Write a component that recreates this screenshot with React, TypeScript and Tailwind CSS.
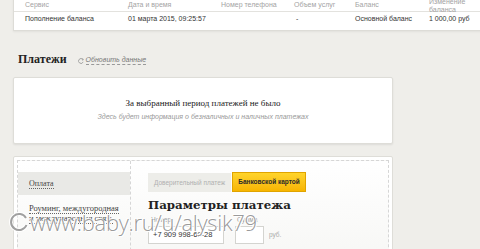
import React from "react";

const sans = { fontFamily: '"Liberation Sans", Arial, sans-serif' };
const serif = { fontFamily: '"Liberation Serif", "DejaVu Serif", serif' };
const serifWide = { fontFamily: '"DejaVu Serif", "Liberation Serif", serif' };

export default function App() {
  return (
    <div className="relative w-[480px] h-[249px] overflow-hidden bg-[#efeeea]" style={sans}>
      {/* top table card */}
      <div className="ml-[13px] mt-[-7px] w-[480px] bg-white border-l border-b border-[#dddcd7] shadow-[0_1px_2px_rgba(0,0,0,0.06)]">
        <div className="grid grid-cols-[103px_93px_73px_61px_74px_1fr] pl-[11px] h-[19px] items-center border-b border-[#e3e2de] text-[7px] leading-[8px] text-[#a3a3a3]">
          <div className="pt-[3px]">Сервис</div>
          <div className="pt-[3px]">Дата и время</div>
          <div className="pt-[3px]">Номер телефона</div>
          <div className="pt-[3px]">Объем услуг</div>
          <div className="pt-[3px]">Баланс</div>
          <div className="pt-[5px]">Изменение<br />баланса</div>
          <div />
        </div>
        <div className="grid grid-cols-[103px_93px_73px_61px_74px_1fr] pl-[11px] h-[18px] items-center text-[7px] text-[#333]">
          <div>Пополнение баланса</div>
          <div>01 марта 2015, 09:25:57</div>
          <div />
          <div className="pl-[2px]">-</div>
          <div>Основной баланс</div>
          <div>1 000,00 руб</div>
          <div />
        </div>
      </div>

      {/* Платежи header */}
      <div className="flex items-end ml-[18px] mt-[21px] h-[14px] gap-[11px]">
        <div className="text-[12px] leading-[13px] font-bold text-[#222]" style={serif}>Платежи</div>
        <div className="flex items-center gap-[2px] pb-[1px] text-[7px] leading-[8px] italic text-[#777]">
          <svg width="6" height="6" viewBox="0 0 10 10" className="mt-[1px]">
            <path d="M8 2.5 A4 4 0 1 0 8.6 6.5" fill="none" stroke="#888" strokeWidth="1.2" />
            <path d="M6.5 1 L9 2.2 L7.6 4.4" fill="none" stroke="#888" strokeWidth="1.1" />
          </svg>
          <span className="border-b border-dashed border-[#999]">Обновить данные</span>
        </div>
      </div>

      {/* empty state card */}
      <div className="ml-[13px] mt-[11px] w-[380px] h-[67px] bg-white border border-[#deddd8] rounded-[2px] shadow-[0_1px_2px_rgba(0,0,0,0.08)] flex flex-col items-center pt-[20px]">
        <div className="text-[9px] leading-[11px] text-[#222]" style={serif}>За выбранный период платежей не было</div>
        <div className="mt-[4px] text-[7px] leading-[8px] italic text-[#999]">Здесь будет информация о безналичных и наличных платежах</div>
      </div>

      {/* payment card */}
      <div className="ml-[13px] mt-[12px] w-[380px] h-[120px] bg-white border border-[#deddd8] rounded-[2px] p-[3px]">
        <div className="flex h-full border border-dashed border-[#d6d6d6] bg-gradient-to-b from-white to-[#f6f6f4]">
          <div className="w-[113px] border-r border-dashed border-[#d6d6d6] pt-[11px]">
            <div className="h-[23px] bg-[#e9e9e6] flex items-center pl-[11px]">
              <span className="text-[8px] leading-[9px] text-[#444] border-b border-dotted border-[#666]" style={serif}>Оплата</span>
            </div>
            <div className="pl-[11px] pt-[8px] text-[8.5px] leading-[10px] text-[#444]" style={serif}>
              <span className="border-b border-dotted border-[#666]">Роуминг, междугородная</span>
              <br />
              <span className="border-b border-dotted border-[#666]">и международная связь</span>
            </div>
          </div>
          <div className="flex-1 pl-[17px] pt-[11px]">
            <div className="flex items-start">
              <div className="h-[19px] mt-[1px] w-[83px] bg-[#edede9] flex items-center justify-center text-[6.5px] text-[#b0b0b0]">Доверительный платеж</div>
              <div className="h-[20px] w-[74px] ml-[1px] bg-gradient-to-b from-[#ffd42a] to-[#f7b500] border border-[#e0a400] flex items-center justify-center text-[6.5px] font-bold text-[#2a2a2a]">Банковской картой</div>
            </div>
            <div className="mt-[6px] text-[11.8px] leading-[14px] font-bold text-[#222]" style={serifWide}>Параметры платежа</div>
            <div className="flex mt-[4px] text-[6.5px] leading-[8px] text-[#999]">
              <span className="ml-[3px] w-[86px]">Номер</span>
              <span>Сумма</span>
            </div>
            <div className="flex items-center mt-[2px]">
              <div className="w-[76px] h-[18px] bg-white border border-[#d4d4d0] flex items-center pl-[4px] text-[7.5px] text-[#333]">+7 909 998-60-28</div>
              <div className="ml-[11px] w-[29px] h-[18px] bg-white border border-[#d4d4d0]" />
              <span className="ml-[5px] text-[6.5px] text-[#aaa]">руб.</span>
            </div>
          </div>
        </div>
      </div>

      {/* watermark */}
      <div className="absolute left-[9px] top-[209px] flex items-center pointer-events-none">
        <svg width="20" height="20" viewBox="0 0 20 20">
          <path d="M17 6 A8 8 0 1 0 17.5 13" fill="none" stroke="white" strokeWidth="4" />
          <path d="M17 6 A8 8 0 1 0 17.5 13" fill="none" stroke="#a0a0a0" strokeWidth="2" />
        </svg>
        <span
          className="ml-[1px] text-[22px] leading-[26px] text-[rgba(140,140,140,0.9)] tracking-[-0.3px] [text-shadow:0_0_1px_#fff,0_0_2px_#fff,1px_1px_0_#fff,-1px_-1px_0_#fff]"
          style={{ fontFamily: '"Open Sans", "Noto Sans", sans-serif', fontWeight: 300 }}
        >
          www.baby.ru/u/alysik79
        </span>
      </div>
    </div>
  );
}
